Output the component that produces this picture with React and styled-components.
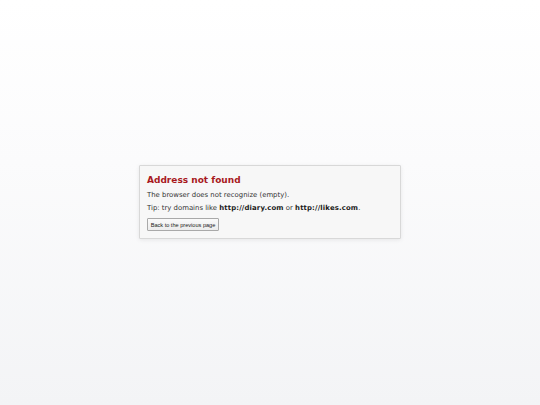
import React from 'react'
import styled, { createGlobalStyle } from 'styled-components';

const GlobalStyle = createGlobalStyle`
  html, body {
    margin: 0;
    height: 100%;
  }
  body {
    background: linear-gradient(to bottom, #ffffff 0%, #fbfbfc 40%, #f3f4f6 100%);
    font-family: "DejaVu Sans", Verdana, sans-serif;
  }
  #root {
    height: 100%;
  }
`;

const Page = styled.div`
  height: 405px;
  display: flex;
  justify-content: center;
  align-items: flex-start;
  padding-top: 165px;
  box-sizing: border-box;
`;

const Box = styled.div`
  width: 262px;
  height: 74px;
  box-sizing: border-box;
  padding: 8px 7px 0 7px;
  background: #f7f7f7;
  border: 1px solid #d8d8d8;
  border-radius: 1px;
  box-shadow: 0 1px 4px rgba(0, 0, 0, 0.08);
`;

const Title = styled.h1`
  margin: 0 0 3px 0;
  font-size: 9px;
  line-height: 13px;
  font-weight: bold;
  color: #a8191d;
`;

const Line = styled.p`
  margin: 0 0 3px 0;
  font-size: 6.9px;
  line-height: 10px;
  color: #333;
`;

const Strong = styled.b`
  color: #1a1a1a;
  letter-spacing: 0.15px;
`;

const Button = styled.button`
  display: block;
  margin-top: 5px;
  height: 13px;
  width: 72px;
  padding: 0;
  font-family: "Liberation Sans", Arial, sans-serif;
  font-size: 5.6px;
  color: #222;
  background: linear-gradient(#fafafa, #ececec);
  border: 1px solid #a9a9a9;
  border-radius: 1px;
`;

export default function App() {
  return (
    <>
      <GlobalStyle />
      <Page>
        <Box>
          <Title>Address not found</Title>
          <Line>The browser does not recognize (empty).</Line>
          <Line>
            Tip: try domains like <Strong>http://diary.com</Strong> or <Strong>http://likes.com</Strong>.
          </Line>
          <Button>Back to the previous page</Button>
        </Box>
      </Page>
    </>
  );
}
